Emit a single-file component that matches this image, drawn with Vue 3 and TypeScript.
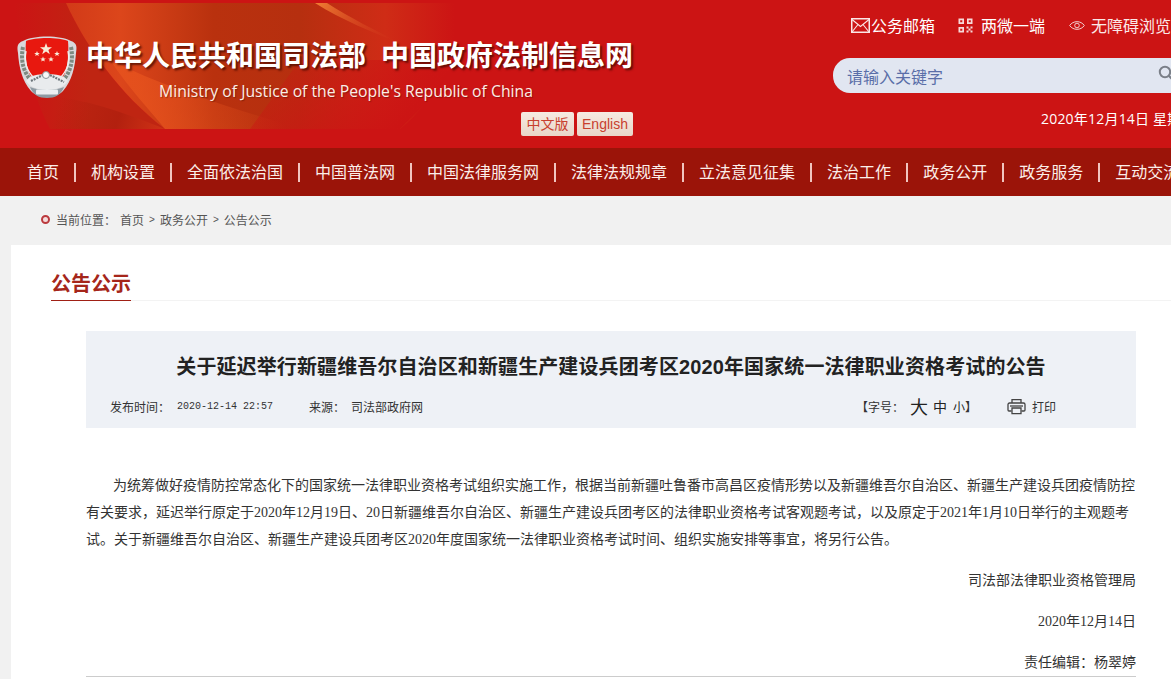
<script setup lang="ts">
interface NavItem {
  label: string
}

const navItems: NavItem[] = [
  { label: '首页' },
  { label: '机构设置' },
  { label: '全面依法治国' },
  { label: '中国普法网' },
  { label: '中国法律服务网' },
  { label: '法律法规规章' },
  { label: '立法意见征集' },
  { label: '法治工作' },
  { label: '政务公开' },
  { label: '政务服务' },
  { label: '互动交流' },
]
</script>

<template>
  <div class="page">
    <header class="header">
      <svg class="banner-art" width="660" height="148" viewBox="0 0 660 148" aria-hidden="true">
        <defs>
          <linearGradient id="sweep" gradientUnits="userSpaceOnUse" x1="66" y1="0" x2="455" y2="0">
            <stop offset="0" stop-color="#d23a18" />
            <stop offset="0.14" stop-color="#dc461b" />
            <stop offset="0.38" stop-color="#b9310e" />
            <stop offset="0.6" stop-color="#b62f0f" />
            <stop offset="0.82" stop-color="#cf2c16" />
            <stop offset="1" stop-color="#cc1414" />
          </linearGradient>
          <linearGradient id="side" gradientUnits="userSpaceOnUse" x1="14" y1="0" x2="90" y2="0">
            <stop offset="0" stop-color="#cc1414" />
            <stop offset="1" stop-color="#bf2512" />
          </linearGradient>
          <linearGradient id="glow" gradientUnits="userSpaceOnUse" x1="150" y1="120" x2="270" y2="80">
            <stop offset="0" stop-color="#e8541e" stop-opacity="0.75" />
            <stop offset="1" stop-color="#e8541e" stop-opacity="0" />
          </linearGradient>
          <linearGradient id="fade" gradientUnits="userSpaceOnUse" x1="300" y1="0" x2="400" y2="129">
            <stop offset="0" stop-color="#cc1414" stop-opacity="0" />
            <stop offset="1" stop-color="#cc1414" />
          </linearGradient>
          <linearGradient id="band" gradientUnits="userSpaceOnUse" x1="60" y1="95" x2="160" y2="125">
            <stop offset="0" stop-color="#a81c0c" stop-opacity="0" />
            <stop offset="0.6" stop-color="#a81c0c" stop-opacity="0.55" />
            <stop offset="1" stop-color="#d83a18" stop-opacity="0.5" />
          </linearGradient>
          <linearGradient id="streak" gradientUnits="userSpaceOnUse" x1="315" y1="3" x2="400" y2="42">
            <stop offset="0" stop-color="#f08034" />
            <stop offset="1" stop-color="#d0301a" stop-opacity="0" />
          </linearGradient>
        </defs>
        <path d="M14 3H66C85 45 120 95 165 129H50C30 90 20 40 14 3Z" fill="url(#side)" />
        <path d="M50 96C90 100 130 115 165 129H50Z" fill="url(#band)" />
        <path d="M66 3H463C475 30 445 90 400 129H165C120 95 85 45 66 3Z" fill="url(#sweep)" />
        <path d="M110 60C130 90 150 110 165 129H300C240 110 170 90 110 60Z" fill="url(#glow)" />
        <path d="M300 60H470L400 129H250Z" fill="url(#fade)" />
        <path d="M315 3H327C350 18 375 30 402 44C372 32 342 20 315 3Z" fill="url(#streak)" />
      </svg>

      <div class="brand">
        <svg class="emblem" width="60" height="64" viewBox="0 0 60 64" aria-hidden="true">
          <path d="M6 6C16 0 44 0 54 6C60 8 60 12 59 18C58 32 55 46 46 56C38 64 22 64 14 56C5 46 2 32 1 18C0 12 0 8 6 6Z" fill="#d9d9dc" />
          <path d="M9 6C18 2 42 2 51 6C52 18 51 34 46 42C38 48 22 48 14 42C9 34 8 18 9 6Z" fill="#e8180f" />
          <path d="M29 8L30.5 12.3H35L31.4 15L32.8 19.3L29 16.6L25.2 19.3L26.6 15L23 12.3H27.5Z" fill="#f8ecd8" />
          <path d="M20 16L20.8 18H22.8L21.2 19.2L21.8 21L20 20L18.2 21L18.8 19.2L17.2 18H19.2Z" fill="#f8ecd8" />
          <path d="M40 16L40.8 18H42.8L41.2 19.2L41.8 21L40 20L38.2 21L38.8 19.2L37.2 18H39.2Z" fill="#f8ecd8" />
          <path d="M26 21.5L26.8 23.5H28.8L27.2 24.7L27.8 26.5L26 25.5L24.2 26.5L24.8 24.7L23.2 23.5H25.2Z" fill="#f8ecd8" />
          <path d="M34 21.5L34.8 23.5H36.8L35.2 24.7L35.8 26.5L34 25.5L32.2 26.5L32.8 24.7L31.2 23.5H33.2Z" fill="#f8ecd8" />
          <path d="M6 12C3 26 7 40 17 48M54 12C57 26 53 40 43 48" stroke="#7d8a80" stroke-width="4" fill="none" stroke-dasharray="3 1.2" />
          <path d="M9 16C7 26 10 36 17 43M51 16C53 26 50 36 43 43" stroke="#eef0ee" stroke-width="1.4" fill="none" />
          <path d="M13 42C20 38 40 38 47 42L51 46C44 58 16 58 9 46Z" fill="#e9ebed" />
          <path d="M14 46L26 40M33 40L47 47" stroke="#6f777c" stroke-width="2.2" stroke-dasharray="2 1" />
          <circle cx="29" cy="40" r="3.5" fill="#f7f7f7" stroke="#8a9196" stroke-width="1" />
          <path d="M13 52C22 56 38 56 47 52C44 60 38 63 30 63C22 63 16 60 13 52Z" fill="#8f9ba3" />
          <rect x="19" y="54.5" width="22" height="5" rx="1" fill="#eceff1" />
        </svg>
        <div class="brand-text">
          <h1 class="site-name">
            <span>中华人民共和国司法部</span>
            <span>中国政府法制信息网</span>
          </h1>
          <p class="site-en">Ministry of Justice of the People's Republic of China</p>
          <div class="lang">
            <a class="lang-btn lang-zh">中文版</a>
            <a class="lang-btn lang-en">English</a>
          </div>
        </div>
      </div>

      <div class="tools">
        <div class="links">
          <a class="link link-mail">
            <svg width="19" height="15" viewBox="0 0 19 15" aria-hidden="true">
              <rect x="0.75" y="0.75" width="17.5" height="13.5" fill="none" stroke="#fbe6e6" stroke-width="1.5" />
              <path d="M1 1.5L9.5 8.5L18 1.5M1 14L7 6.5M18 14L12 6.5" fill="none" stroke="#fbe6e6" stroke-width="1.1" />
            </svg>
            公务邮箱
          </a>
          <a class="link link-qr">
            <svg width="15" height="15" viewBox="0 0 15 15" aria-hidden="true">
              <path d="M.5 .5H6V6H.5ZM2.2 2.2V4.3H4.3V2.2ZM9 .5H14.5V6H9ZM10.7 2.2V4.3H12.8V2.2ZM.5 9H6V14.5H.5ZM2.2 10.7V12.8H4.3V10.7Z" fill="#f6d9d9" fill-rule="evenodd" />
              <path d="M8.5 8.5H10.5V10.5H8.5ZM12.5 8.5H14.5V10.5H12.5ZM10.5 10.5H12.5V12.5H10.5ZM8.5 12.5H10.5V14.5H8.5ZM12.5 12.5H14.5V14.5H12.5Z" fill="#f6d9d9" />
            </svg>
            两微一端
          </a>
          <a class="link link-eye">
            <svg width="16" height="11" viewBox="0 0 16 11" aria-hidden="true">
              <path d="M0.7 5.5C4 0.4 12 0.4 15.3 5.5C12 10.6 4 10.6 0.7 5.5Z" fill="none" stroke="#f3cfcf" stroke-width="1" />
              <circle cx="8" cy="5.5" r="2.3" fill="none" stroke="#f3cfcf" stroke-width="1" />
            </svg>
            无障碍浏览
          </a>
        </div>
        <div class="search">
          <span class="placeholder">请输入关键字</span>
          <svg class="search-icon" width="16" height="16" viewBox="0 0 16 16" aria-hidden="true">
            <circle cx="7" cy="7" r="5.2" fill="none" stroke="#7a7f88" stroke-width="2" />
            <path d="M11 11L15 15" stroke="#7a7f88" stroke-width="2" />
          </svg>
        </div>
        <div class="today">2020年12月14日 星期一</div>
      </div>
    </header>

    <nav class="nav">
      <a v-for="item in navItems" :key="item.label" class="nav-item">{{ item.label }}</a>
    </nav>

    <main class="main">
      <div class="crumb">
        <i class="crumb-dot"></i>
        <span>当前位置：</span>
        <span class="crumb-link">首页</span>
        <span class="crumb-sep">&gt;</span>
        <span>政务公开</span>
        <span class="crumb-sep">&gt;</span>
        <span>公告公示</span>
      </div>

      <section class="card">
        <div class="section-head">
          <h2 class="section-title">公告公示</h2>
        </div>

        <article class="article">
          <div class="article-head">
            <h3 class="article-title">关于延迟举行新疆维吾尔自治区和新疆生产建设兵团考区2020年国家统一法律职业资格考试的公告</h3>
            <div class="meta">
              <span class="meta-label">发布时间：</span>
              <span class="meta-time">2020-12-14 22:57</span>
              <span class="meta-source">来源：</span>
              <span class="meta-org">司法部政府网</span>
              <span class="font-size">
                【字号：<b class="fs-big">大</b><b class="fs-mid">中</b><b class="fs-small">小</b>】
              </span>
              <span class="print">
                <svg width="19" height="17" viewBox="0 0 19 17" aria-hidden="true">
                  <path d="M5 5V1.6H14V5M4.5 13H2C1.4 13 1 12.6 1 12V6.5C1 5.7 1.7 5 2.5 5H16.5C17.3 5 18 5.7 18 6.5V12C18 12.6 17.6 13 17 13H14.5" fill="none" stroke="#444" stroke-width="1.3" />
                  <path d="M5 10H14V15.6H5Z" fill="none" stroke="#444" stroke-width="1.3" />
                  <path d="M3 8H16" stroke="#444" stroke-width="1.3" />
                </svg>
                打印
              </span>
            </div>
          </div>

          <div class="article-body">
            <p class="lead">为统筹做好疫情防控常态化下的国家统一法律职业资格考试组织实施工作，根据当前新疆吐鲁番市高昌区疫情形势以及新疆维吾尔自治区、新疆生产建设兵团疫情防控有关要求，延迟举行原定于<span class="num">2020</span>年<span class="num">12</span>月<span class="num">19</span>日、<span class="num">20</span>日新疆维吾尔自治区、新疆生产建设兵团考区的法律职业资格考试客观题考试，以及原定于<span class="num">2021</span>年<span class="num">1</span>月<span class="num">10</span>日举行的主观题考试。关于新疆维吾尔自治区、新疆生产建设兵团考区<span class="num">2020</span>年度国家统一法律职业资格考试时间、组织实施安排等事宜，将另行公告。</p>
            <p class="sign">司法部法律职业资格管理局</p>
            <p class="sign"><span class="num">2020</span>年<span class="num">12</span>月<span class="num">14</span>日</p>
            <p class="sign editor">责任编辑：杨翠婷</p>
          </div>
        </article>
      </section>
    </main>
  </div>
</template>

<style>
html,
body {
  margin: 0;
  overflow: hidden;
}
</style>

<style scoped>
.page {
  width: 1171px;
  height: 679px;
  overflow: hidden;
  background: #f1f1f1;
  font-family: "Liberation Sans", "Noto Sans CJK SC", sans-serif;
}

.header {
  position: relative;
  height: 148px;
  background: #cc1414;
  display: flex;
  overflow: hidden;
}

.banner-art {
  position: absolute;
  left: 0;
  top: 0;
}

.brand {
  position: relative;
  display: flex;
  width: 833px;
  flex-shrink: 0;
  padding: 35px 0 0 17px;
  box-sizing: border-box;
}

.emblem {
  flex-shrink: 0;
}

.brand-text {
  width: 547px;
  margin-left: 9px;
  margin-top: 5px;
}

.site-name {
  margin: 0;
  display: flex;
  gap: 15px;
  font-size: 28px;
  line-height: 34px;
  font-weight: 700;
  color: #fff;
  white-space: nowrap;
  text-shadow: 2px 2px 2px rgba(70, 10, 0, 0.75);
}

.site-en {
  margin: 6px 0 0 73px;
  font-family: "Open Sans", sans-serif;
  font-size: 15.75px;
  line-height: 22px;
  color: #fbeee6;
  white-space: nowrap;
  text-shadow: 1px 1px 1px rgba(70, 10, 0, 0.4);
}

.lang {
  display: flex;
  justify-content: flex-end;
  gap: 3px;
  margin-top: 10px;
}

.lang-btn {
  height: 24px;
  line-height: 24px;
  text-align: center;
  font-size: 14px;
  color: #c8402e;
  border-radius: 2px;
  background: linear-gradient(#f6ebe2, #e9d6c8);
}

.lang-zh {
  width: 53px;
}

.lang-en {
  width: 56px;
}

.tools {
  position: relative;
  flex: 1;
  min-width: 0;
}

.links {
  display: flex;
  align-items: center;
  height: 18px;
  margin-top: 16px;
  margin-left: 18px;
  white-space: nowrap;
  font-size: 16px;
  color: #fff;
}

.link {
  display: flex;
  align-items: center;
  flex-shrink: 0;
}

.link-mail {
  gap: 1px;
}

.link-qr {
  gap: 8px;
  margin-left: 23px;
}

.link-eye {
  gap: 6px;
  margin-left: 24px;
  color: #fbe8e8;
}

.search {
  display: flex;
  align-items: center;
  width: 360px;
  height: 35px;
  margin-top: 24px;
  padding-left: 14px;
  box-sizing: border-box;
  background: #e1e6f1;
  border-radius: 17px 0 0 17px;
}

.placeholder {
  font-size: 16px;
  color: #5a6ea8;
}

.search-icon {
  position: absolute;
  left: 325px;
  top: 65px;
}

.today {
  margin-top: 17px;
  margin-left: 208px;
  font-family: "Open Sans", "Noto Sans CJK SC", sans-serif;
  font-size: 14px;
  line-height: 18px;
  letter-spacing: 0.2px;
  color: #fff;
  white-space: nowrap;
}

.nav {
  display: flex;
  align-items: center;
  height: 48px;
  padding-left: 12px;
  background: #9b1409;
  white-space: nowrap;
}

.nav-item {
  flex-shrink: 0;
  padding: 0 15px;
  border-right: 2px solid #f1c5c0;
  font-size: 16px;
  line-height: 19px;
  color: #fbeee9;
}

.nav-item:last-child {
  border-right: 0;
}

.crumb {
  display: flex;
  align-items: center;
  height: 49px;
  padding: 0 0 2px 41px;
  box-sizing: border-box;
  font-size: 12px;
  color: #555;
  white-space: nowrap;
}

.crumb-dot {
  width: 5px;
  height: 5px;
  margin-right: 6px;
  border: 2px solid #bb3a3e;
  border-radius: 50%;
  background: #f3dcdc;
}

.crumb-link {
  margin-left: 4px;
}

.crumb-sep {
  margin: 0 5px;
  font-size: 10px;
}

.card {
  margin-left: 11px;
  height: 434px;
  background: #fff;
  overflow: hidden;
}

.section-head {
  height: 56px;
  margin-left: 40px;
  box-sizing: border-box;
  border-bottom: 1px solid #f3f3f3;
}

.section-title {
  display: inline-block;
  margin: 0;
  height: 56px;
  box-sizing: border-box;
  padding-top: 25px;
  border-bottom: 1px solid #a02015;
  font-size: 20px;
  line-height: 28px;
  font-weight: 700;
  color: #a5261a;
}

.article {
  width: 1050px;
  margin: 30px 0 0 75px;
}

.article-head {
  height: 97px;
  box-sizing: border-box;
  padding-top: 20px;
  background: #eef1f6;
}

.article-title {
  margin: 0;
  text-align: center;
  font-size: 20px;
  line-height: 32px;
  font-weight: 700;
  letter-spacing: 0.11px;
  color: #222;
  white-space: nowrap;
}

.meta {
  display: flex;
  align-items: center;
  height: 20px;
  margin-top: 13px;
  padding-left: 24px;
  font-size: 12px;
  color: #333;
  white-space: nowrap;
}

.meta-time {
  margin-left: 7px;
  font-family: "Liberation Mono", monospace;
  font-size: 10px;
}

.meta-source {
  margin-left: 36px;
}

.meta-org {
  margin-left: 6px;
}

.font-size {
  display: flex;
  align-items: center;
  margin-left: 433px;
}

.fs-big,
.fs-mid,
.fs-small {
  font-weight: 400;
  color: #222;
}

.fs-big {
  margin-left: 6px;
  font-size: 18px;
}

.fs-mid {
  margin-left: 5px;
  font-size: 14px;
}

.fs-small {
  margin-left: 6px;
  font-size: 12px;
}

.print {
  display: flex;
  align-items: center;
  gap: 6px;
  margin-left: 30px;
}

.article-body {
  padding-top: 44px;
  font-size: 14px;
  line-height: 27px;
  color: #333;
}

.article-body p {
  margin: 0;
}

.article-body .lead {
  text-indent: 27px;
}

.article-body .sign {
  margin-top: 14px;
  text-align: right;
}

.article-body .editor {
  border-bottom: 1px solid #ccc;
}

.num {
  font-family: "Liberation Serif", serif;
  line-height: 1;
}
</style>
